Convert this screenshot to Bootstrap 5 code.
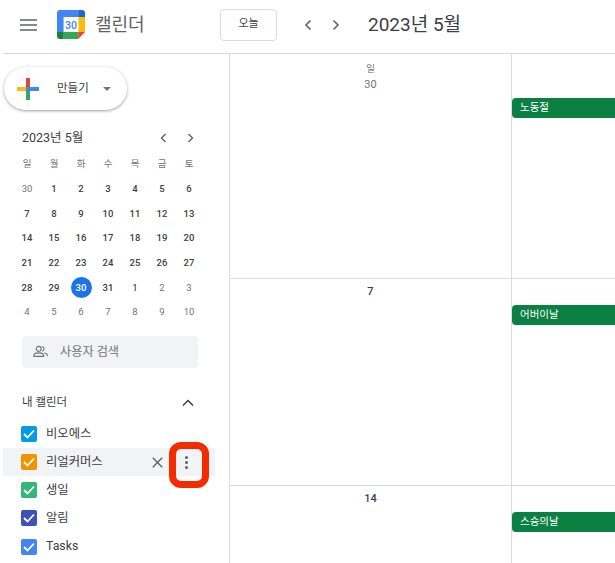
<!DOCTYPE html>
<html lang="ko">
<head>
    <meta charset="UTF-8">
    <title>캘린더</title>
    <link href="https://cdn.jsdelivr.net/npm/bootstrap@5.3.0/dist/css/bootstrap.min.css" rel="stylesheet">
    <style>
        html, body { height: 563px; overflow: hidden; }
        body { font-family: Roboto, "Noto Sans CJK KR", sans-serif; color: #3c4043; background: #fff; }
        .app-header { height: 54px; margin-left: 3px; padding-bottom: 4px; border-bottom: 1px solid #dadce0; }
        .menu-btn { width: 17px; margin-left: 17px; }
        .app-logo { margin-left: 20px; }
        .app-name { font-size: 18px; color: #5f6368; margin-left: 10px; width: 125px; line-height: 24px; }
        .today-btn { width: 57px; height: 32px; border: 1px solid #dadce0; border-radius: 4px; font-size: 11px; color: #3c4043; background: #fff; padding: 0; }
        .nav-arrows { margin-left: 27px; gap: 20px; }
        .head-title { font-size: 19px; margin-left: 28px; color: #3c4043; line-height: 24px; }
        .page-body { height: 509px; }
        .side-col { width: 230px; flex: none; border-right: 1px solid #dadce0; padding-top: 13px; }
        .create-btn { width: 123px; height: 43px; margin-left: 4px; border-radius: 22px; background: #fff; border: 0; padding: 0 0 0 13px; box-shadow: 0 1px 2px rgba(60,64,67,.3), 0 1px 3px 1px rgba(60,64,67,.15); font-size: 11.500px; color: #3c4043; }
        .create-label { margin-left: 18px; }
        .create-caret { margin-left: 14px; width: 0; height: 0; border-left: 4px solid transparent; border-right: 4px solid transparent; border-top: 4px solid #70757a; }
        .mini-head { margin: 17px 0 0 22px; width: 178px; height: 22px; font-size: 12.500px; color: #3c4043; }
        .mini-arrows { gap: 20px; margin-right: 6.500px; }
        .mini-grid { display: grid; grid-template-columns: repeat(7, 27px); grid-auto-rows: 24.700px; margin: 3px 0 0 13.500px; font-size: 9.500px; font-weight: 500; text-align: center; }
        .mini-grid > span { display: flex; align-items: center; justify-content: center; }
        .mini-grid .dow { color: #70757a; font-weight: 400; }
        .mini-grid .other { color: #70757a; font-weight: 400; }
        .mini-grid .dark { color: #202124; font-weight: 400; }
        .mini-grid .sel > b { width: 21px; height: 21px; border-radius: 50%; background: #1a73e8; color: #fff; font-weight: 500; display: flex; align-items: center; justify-content: center; }
        .people-box { width: 176px; height: 32px; margin: 11px 0 0 22px; background: #f1f3f4; border-radius: 4px; font-size: 12.200px; color: #70757a; padding-left: 11px; gap: 12px; }
        .cal-head { margin: 25px 0 0 22px; width: 176px; height: 20px; font-size: 11.500px; color: #3c4043; }
        .cal-list { margin-top: 7px; }
        .cal-item { height: 28.200px; margin-left: 3px; width: 212px; padding-left: 18px; font-size: 12.300px; color: #3c4043; gap: 9px; }
        .cal-item.hovered { background: #f1f3f4; }
        .check-box { width: 16px; height: 16px; border-radius: 2px; flex: none; display: flex; align-items: center; justify-content: center; }
        .item-name { flex: 1; }
        .item-x { margin-right: -3px; }
        .more-wrap { width: 40px; height: 46px; margin: 5px 6px 0 0; padding: 0 6px 5px 0; flex: none; border: 7px solid #f52b00; border-radius: 12px; display: flex; align-items: center; justify-content: center; }
        .more-dots { width: 3px; height: 3px; border-radius: 50%; background: #5f6368; box-shadow: 0 -5px 0 #5f6368, 0 5px 0 #5f6368; }
        .month-grid { flex: 1; display: grid; grid-template-columns: 282px 1fr; grid-template-rows: 225px 207px 1fr; min-width: 0; }
        .day-cell { border-right: 1px solid #dadce0; border-bottom: 1px solid #dadce0; text-align: center; font-size: 11px; color: #3c4043; font-weight: 500; padding-top: 5px; }
        .day-cell.col-last { border-right: 0; text-align: left; padding-top: 26px; }
        .day-cell.col-first { padding-top: 44px; }
        .day-cell.row-last { border-bottom: 0; }
        .dow-label { font-size: 9.500px; color: #70757a; font-weight: 400; line-height: 13px; margin: 3px 0 2px; }
        .day-num { line-height: 16px; }
        .day-num.muted { color: #70757a; font-weight: 400; }
        .holiday { height: 20px; margin-right: -1px; background: #0b8043; color: #fff; border-radius: 4px 0 0 4px; font-size: 10.500px; font-weight: 400; padding-left: 8px; line-height: 20px; }
    </style>
</head>
<body>

    <!-- Header -->
    <div class="app-header d-flex align-items-center">
        <svg class="menu-btn" height="12" viewBox="0 0 17 12"><path d="M0 1h17M0 6h17M0 11h17" stroke="#5f6368" stroke-width="1.600"/></svg>
        <svg class="app-logo" width="28" height="29" viewBox="0 0 29 29" preserveAspectRatio="none">
            <path d="M3 0h19v7H7v15H0V3a3 3 0 0 1 3-3z" fill="#4285f4"/>
            <path d="M22 0h4a3 3 0 0 1 3 3v4h-7z" fill="#1967d2"/>
            <rect x="22" y="7" width="7" height="15" fill="#fbbc04"/>
            <path d="M0 22h7v7H3a3 3 0 0 1-3-3z" fill="#188038"/>
            <rect x="7" y="22" width="15" height="7" fill="#34a853"/>
            <path d="M22 22h7l-7 7z" fill="#ea4335"/>
            <rect x="7" y="7" width="15" height="15" fill="#fff"/>
            <text x="14.500" y="19" text-anchor="middle" font-family="Roboto" font-size="11" font-weight="500" fill="#4285f4">30</text>
        </svg>
        <div class="app-name">캘린더</div>
        <button class="today-btn" type="button">오늘</button>
        <div class="nav-arrows d-flex align-items-center">
            <svg width="8" height="12" viewBox="0 0 8 12"><path d="M6.500 1.500 2 6l4.500 4.500" fill="none" stroke="#5f6368" stroke-width="1.600"/></svg>
            <svg width="8" height="12" viewBox="0 0 8 12"><path d="M1.500 1.500 6 6l-4.500 4.500" fill="none" stroke="#5f6368" stroke-width="1.600"/></svg>
        </div>
        <div class="head-title">2023년 5월</div>
    </div>

    <div class="page-body d-flex">
        <!-- Sidebar -->
        <div class="side-col">
            <button class="create-btn d-flex align-items-center" type="button">
                <svg width="22" height="22" viewBox="0 0 22 22">
                    <rect x="9" y="0" width="4" height="9" fill="#ea4335"/>
                    <rect x="13" y="9" width="9" height="4" fill="#4285f4"/>
                    <rect x="9" y="13" width="4" height="9" fill="#34a853"/>
                    <rect x="0" y="9" width="9" height="4" fill="#fbbc04"/>
                    <rect x="9" y="9" width="4" height="4" fill="#4285f4"/>
                </svg>
                <span class="create-label">만들기</span>
                <span class="create-caret"></span>
            </button>

            <div class="mini-head d-flex align-items-center justify-content-between">
                <span>2023년 5월</span>
                <span class="mini-arrows d-flex align-items-center">
                    <svg width="7" height="10" viewBox="0 0 7 10"><path d="M5.500 1 1.500 5l4 4" fill="none" stroke="#5f6368" stroke-width="1.400"/></svg>
                    <svg width="7" height="10" viewBox="0 0 7 10"><path d="M1.500 1l4 4-4 4" fill="none" stroke="#5f6368" stroke-width="1.400"/></svg>
                </span>
            </div>

            <div class="mini-grid" id="miniGrid"></div>

            <div class="people-box d-flex align-items-center">
                <svg width="15" height="13" viewBox="0 0 17 14" fill="none" stroke="#70757a" stroke-width="1.300">
                    <circle cx="6.500" cy="4" r="2.800"/>
                    <path d="M1 12.500v-1.200c0-1.800 3-2.800 5.500-2.800s5.500 1 5.500 2.800v1.200z"/>
                    <path d="M10.500 1.300a2.800 2.800 0 0 1 0 5.400M13 8.700c1.800.4 3.200 1.300 3.200 2.600v1.200"/>
                </svg>
                <span>사용자 검색</span>
            </div>

            <div class="cal-head d-flex align-items-center justify-content-between">
                <span>내 캘린더</span>
                <svg class="me-1" width="12" height="8" viewBox="0 0 12 8"><path d="M1 6.500l5-5 5 5" fill="none" stroke="#3c4043" stroke-width="1.500"/></svg>
            </div>

            <div class="cal-list" id="calList"></div>
        </div>

        <!-- Month -->
        <div class="month-grid">
            <div class="day-cell">
                <div class="dow-label">일</div>
                <div class="day-num muted">30</div>
            </div>
            <div class="day-cell col-last col-first"><div class="holiday">노동절</div></div>
            <div class="day-cell">
                <div class="day-num">7</div>
            </div>
            <div class="day-cell col-last"><div class="holiday">어버이날</div></div>
            <div class="day-cell row-last">
                <div class="day-num">14</div>
            </div>
            <div class="day-cell col-last row-last"><div class="holiday">스승의날</div></div>
        </div>
    </div>

    <script src="https://cdn.jsdelivr.net/npm/bootstrap@5.3.0/dist/js/bootstrap.bundle.min.js"></script>
    <script>
        // mini month
        const miniGrid = document.getElementById('miniGrid');
        let miniHtml = '';
        ['일', '월', '화', '수', '목', '금', '토'].forEach(d => {
            miniHtml += `<span class="dow">${d}</span>`;
        });
        const days = [30];
        for (let i = 1; i <= 31; i++) days.push(i);
        for (let i = 1; i <= 10; i++) days.push(i);
        days.forEach((d, i) => {
            if (i === 30) {
                miniHtml += `<span class="sel"><b>${d}</b></span>`;
            } else if (i === 0 || i > 31) {
                miniHtml += `<span class="${i === 32 ? 'dark' : 'other'}">${d}</span>`;
            } else {
                miniHtml += `<span>${d}</span>`;
            }
        });
        miniGrid.innerHTML = miniHtml;

        // calendar list
        const calendars = [
            { name: '비오에스', color: '#039be5' },
            { name: '리얼커머스', color: '#f09300', hovered: true },
            { name: '생일', color: '#33b679' },
            { name: '알림', color: '#3f51b5' },
            { name: 'Tasks', color: '#4285f4' }
        ];
        const check = '<svg width="12" height="10" viewBox="0 0 12 10"><path d="M1 5l3.500 3.500L11 1.500" fill="none" stroke="#fff" stroke-width="1.800"/></svg>';
        const extras = '<svg class="item-x" width="11" height="11" viewBox="0 0 11 11"><path d="M.8.8l9.400 9.400M10.200.8.8 10.200" stroke="#5f6368" stroke-width="1.400"/></svg><span class="more-wrap"><span class="more-dots"></span></span>';
        document.getElementById('calList').innerHTML = calendars.map(c => `
            <div class="cal-item d-flex align-items-center${c.hovered ? ' hovered' : ''}">
                <span class="check-box" data-color="${c.color}">${check}</span>
                <span class="item-name">${c.name}</span>
                ${c.hovered ? extras : ''}
            </div>`).join('');
        document.querySelectorAll('.check-box').forEach(box => {
            box.style.background = box.dataset.color;
        });
    </script>

</body>
</html>
